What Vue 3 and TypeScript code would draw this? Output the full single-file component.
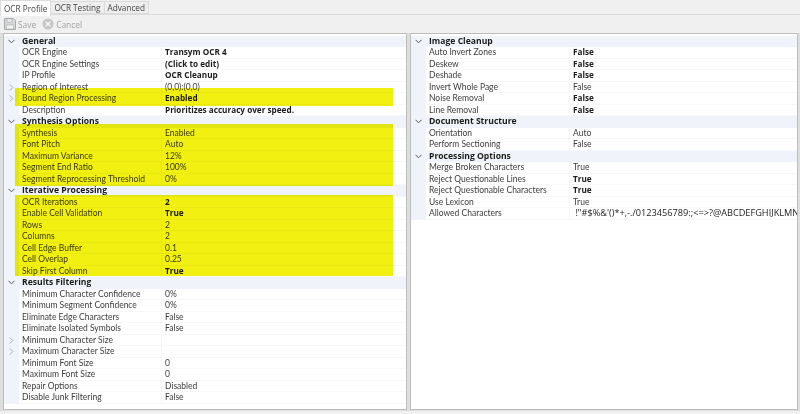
<script setup lang="ts">
type Row = { n: string; v?: string; b?: boolean; x?: boolean; h?: boolean; c?: boolean };
const left: Row[] = [
  { n: 'General', h: true },
  { n: 'OCR Engine', v: 'Transym OCR 4', b: true },
  { n: 'OCR Engine Settings', v: '(Click to edit)', b: true },
  { n: 'IP Profile', v: 'OCR Cleanup', b: true },
  { n: 'Region of Interest', v: '(0,0):(0,0)', x: true },
  { n: 'Bound Region Processing', v: 'Enabled', b: true, x: true },
  { n: 'Description', v: 'Prioritizes accuracy over speed.', b: true },
  { n: 'Synthesis Options', h: true },
  { n: 'Synthesis', v: 'Enabled' },
  { n: 'Font Pitch', v: 'Auto' },
  { n: 'Maximum Variance', v: '12%' },
  { n: 'Segment End Ratio', v: '100%' },
  { n: 'Segment Reprocessing Threshold', v: '0%' },
  { n: 'Iterative Processing', h: true },
  { n: 'OCR Iterations', v: '2', b: true },
  { n: 'Enable Cell Validation', v: 'True', b: true },
  { n: 'Rows', v: '2' },
  { n: 'Columns', v: '2' },
  { n: 'Cell Edge Buffer', v: '0.1' },
  { n: 'Cell Overlap', v: '0.25' },
  { n: 'Skip First Column', v: 'True', b: true },
  { n: 'Results Filtering', h: true },
  { n: 'Minimum Character Confidence', v: '0%' },
  { n: 'Minimum Segment Confidence', v: '0%' },
  { n: 'Eliminate Edge Characters', v: 'False' },
  { n: 'Eliminate Isolated Symbols', v: 'False' },
  { n: 'Minimum Character Size', x: true },
  { n: 'Maximum Character Size', x: true },
  { n: 'Minimum Font Size', v: '0' },
  { n: 'Maximum Font Size', v: '0' },
  { n: 'Repair Options', v: 'Disabled' },
  { n: 'Disable Junk Filtering', v: 'False' },
];
const right: Row[] = [
  { n: 'Image Cleanup', h: true },
  { n: 'Auto Invert Zones', v: 'False', b: true },
  { n: 'Deskew', v: 'False', b: true },
  { n: 'Deshade', v: 'False', b: true },
  { n: 'Invert Whole Page', v: 'False' },
  { n: 'Noise Removal', v: 'False', b: true },
  { n: 'Line Removal', v: 'False', b: true },
  { n: 'Document Structure', h: true },
  { n: 'Orientation', v: 'Auto' },
  { n: 'Perform Sectioning', v: 'False' },
  { n: 'Processing Options', h: true },
  { n: 'Merge Broken Characters', v: 'True' },
  { n: 'Reject Questionable Lines', v: 'True', b: true },
  { n: 'Reject Questionable Characters', v: 'True', b: true },
  { n: 'Use Lexicon', v: 'True' },
  { n: 'Allowed Characters', v: ' !"#$%&\'()*+,-./0123456789:;<=>?@ABCDEFGHIJKLMN', c: true },
];
const panels = [
  { rows: left, cls: 'left' },
  { rows: right, cls: 'right' },
];
const marks = [
  { top: 88, height: 18 },
  { top: 124, height: 62 },
  { top: 195, height: 81 },
];
</script>

<template>
  <div class="app">
    <div class="tabs">
      <div class="tab active">OCR Profile</div>
      <div class="tab">OCR Testing</div>
      <div class="tab">Advanced</div>
    </div>
    <div class="toolbar">
      <span class="tool save">
        <svg width="12" height="12" viewBox="0 0 12 12"><path d="M.5.5h9l2 2v9H.5z" fill="#d5d7d8" stroke="#a9abad"/><path d="M3 1h5v3H3z" fill="#f3f3f3" stroke="#a9abad" stroke-width=".6"/><path d="M2.5 7h7v4h-7z" fill="#f3f3f3" stroke="#a9abad" stroke-width=".6"/></svg>
        Save
      </span>
      <span class="tool">
        <svg width="12" height="12" viewBox="0 0 12 12"><circle cx="6" cy="6" r="5.5" fill="#c4c6c7"/><path d="M3.8 3.8l4.4 4.4M8.2 3.8L3.8 8.2" stroke="#f4f4f4" stroke-width="1.5"/></svg>
        Cancel
      </span>
    </div>
    <div class="panes">
      <div v-for="p in panels" :key="p.cls" class="pane" :class="p.cls">
        <div v-for="r in p.rows" :key="r.n" class="row" :class="{ head: r.h }">
          <div class="gutter">
            <svg v-if="r.h" width="7" height="5" viewBox="0 0 7 5"><path d="M.5.8l3 3 3-3" fill="none" stroke="#555" stroke-width="1"/></svg>
            <svg v-else-if="r.x" width="5" height="7" viewBox="0 0 5 7"><path d="M.8.5l3 3-3 3" fill="none" stroke="#a8a8a8" stroke-width="1"/></svg>
          </div>
          <div class="name">{{ r.n }}</div>
          <div v-if="!r.h" class="value" :class="{ bold: r.b, chars: r.c }">{{ r.v }}</div>
        </div>
        <template v-if="p.cls === 'left'">
          <div
            v-for="m in marks"
            :key="m.top"
            class="mark"
            :style="{ top: m.top - 34 + 'px', height: m.height + 'px' }"
          ></div>
        </template>
      </div>
    </div>
  </div>
</template>

<style scoped>
.app {
  width: 800px;
  height: 414px;
  background: #f0f0f0;
  overflow: hidden;
  font-family: Lato, "Open Sans", sans-serif;
  font-size: 8.5px;
  color: #3c3c3c;
  display: flex;
  flex-direction: column;
  filter: blur(0.3px);
}
.tabs {
  display: flex;
  height: 15px;
  padding-left: 0;
  border-bottom: 1px solid #dcdcdc;
  box-sizing: border-box;
  font-family: "Open Sans", sans-serif;
  font-size: 8.2px;
}
.tab {
  display: flex;
  align-items: center;
  padding: 0 3px;
  margin-top: 1px;
  background: #eeeeee;
  border: 1px solid #dcdcdc;
  border-left-width: 0;
  color: #444;
}
.tab.active {
  background: #fff;
  margin-top: 0;
  height: 15px;
  border-left-width: 1px;
  border-bottom: none;
  padding: 0 3px 0 3px;
}
.toolbar {
  height: 18px;
  display: flex;
  align-items: center;
  gap: 6px;
  padding-left: 4px;
  color: #a3a3a3;
  font-family: "Open Sans", sans-serif;
  font-size: 8.4px;
}
.tool {
  display: flex;
  align-items: center;
  gap: 2px;
}
.panes {
  display: flex;
  gap: 3px;
  padding: 0 2px 2px 3px;
  height: 380px;
  box-sizing: border-box;
  background: linear-gradient(#f0f0f0 0 0) bottom / 100% 2px no-repeat, #dedede;
}
.pane {
  position: relative;
  background: #fff;
  border: 1px solid #bdbdbd;
  box-sizing: border-box;
  height: 377px;
  padding-top: 1.5px;
}
.pane.left {
  width: 404px;
}
.pane.right {
  width: 388px;
}
.row {
  display: flex;
  height: 11.5px;
  line-height: 11px;
  box-shadow: inset 0 -1px 0 #f6f7fa;
  white-space: nowrap;
}
.gutter {
  flex: none;
  width: 15px;
  background: #f0f4fa;
  display: flex;
  align-items: center;
  justify-content: center;
}
.name {
  flex: none;
  width: 143px;
  padding-left: 3px;
  box-sizing: border-box;
  box-shadow: inset -1px 0 0 #f4f6fa;
  overflow: hidden;
}
.right .name {
  width: 144px;
}
.value {
  padding-left: 3px;
  overflow: hidden;
  color: #3c3c3c;
  flex: 1;
  min-width: 0;
}
.value.bold {
  font-family: "Open Sans", sans-serif;
  font-size: 8.2px;
  font-weight: 700;
  line-height: 10px;
  color: #1c1c1c;
}
.value.chars {
  font-family: "Open Sans", sans-serif;
  font-size: 9.2px;
  line-height: 10.5px;
  color: #222;
  white-space: pre;
}
.head {
  background: #f0f4fa;
  box-shadow: none;
}
.head .name {
  font-family: "Open Sans", sans-serif;
  font-size: 8.6px;
  font-weight: 700;
  color: #1c1c1c;
  box-shadow: none;
  width: auto;
}
.mark {
  position: absolute;
  left: 11px;
  width: 378px;
  background: #f2f011;
  mix-blend-mode: multiply;
}
</style>
